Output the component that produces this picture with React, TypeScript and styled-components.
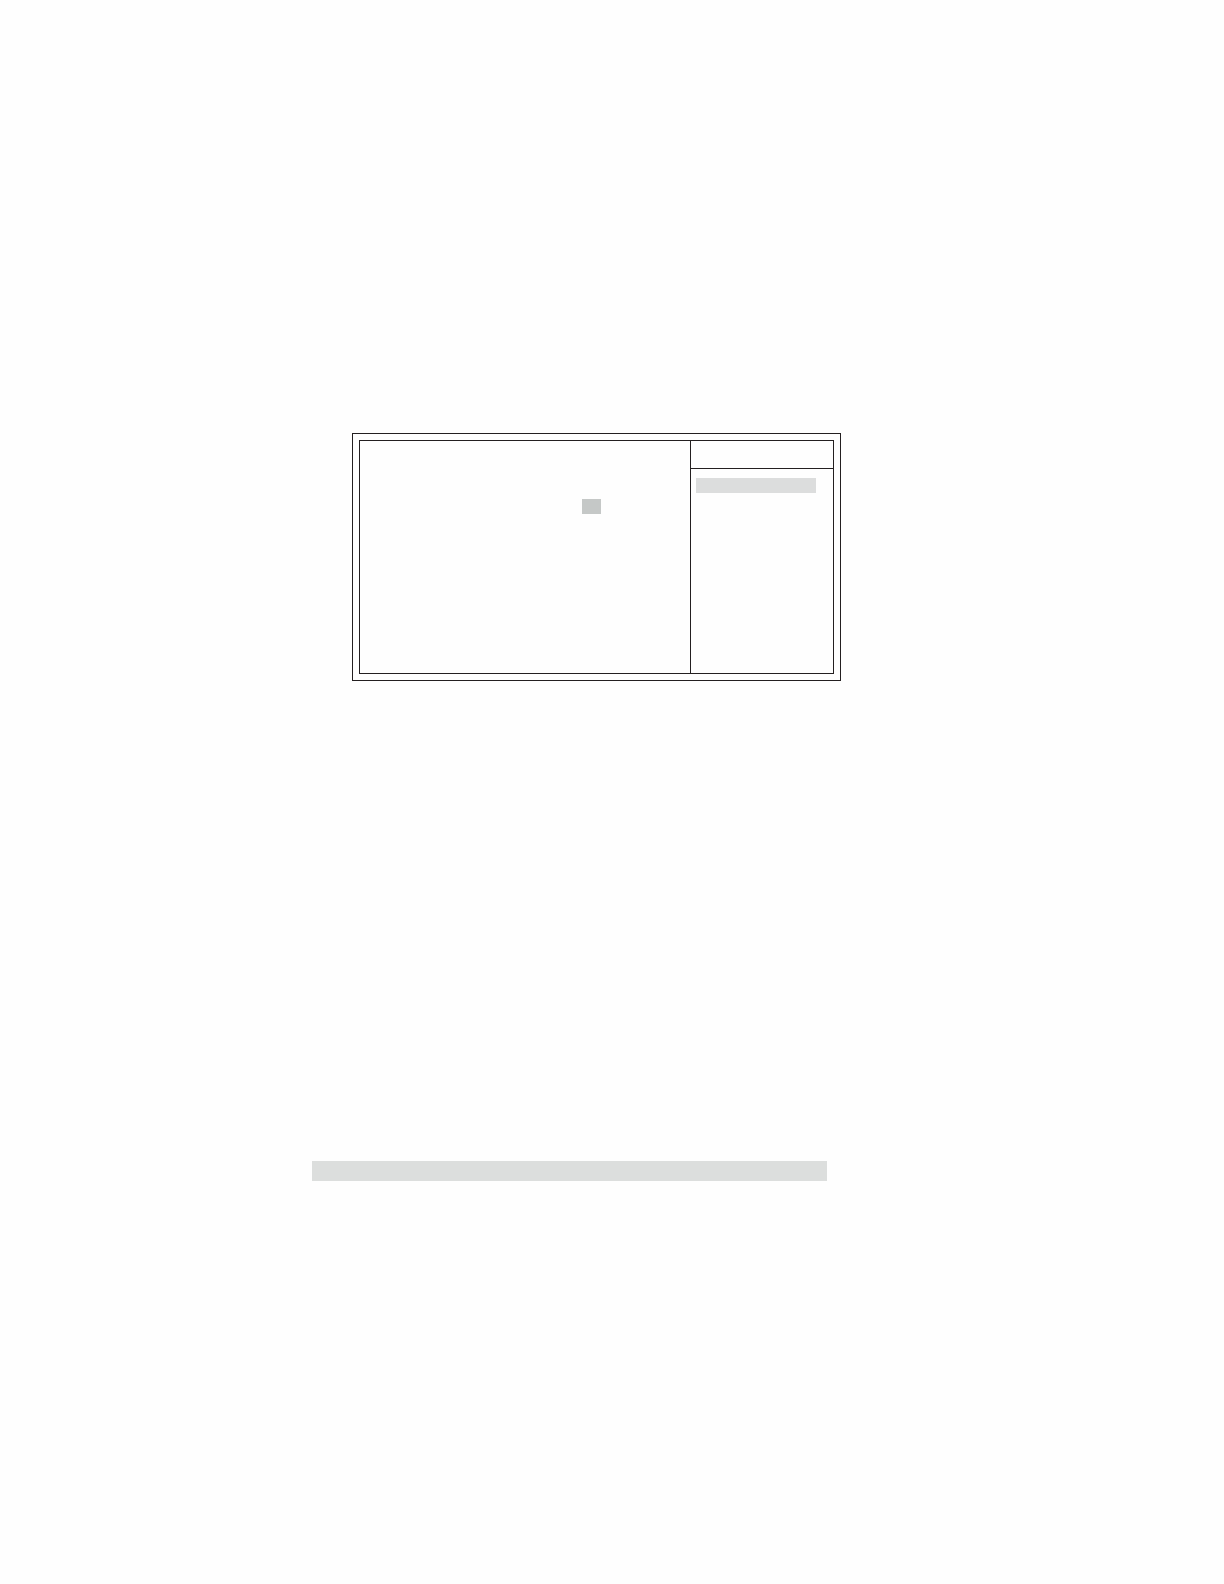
import React from "react";
import styled, { createGlobalStyle } from "styled-components";

const line = "#231f20";

const GlobalStyle = createGlobalStyle`
  *, *::before, *::after {
    box-sizing: border-box;
  }
  body {
    margin: 0;
    background: #fefefe;
    font-family: "Liberation Sans", Arial, sans-serif;
  }
`;

const Page = styled.main`
  display: flex;
  flex-direction: column;
  gap: 480px;
  padding: 433px 383px 403px 312px;
`;

const Frame = styled.section`
  margin-left: 40px;
  padding: 6px;
  border: 1px solid ${line};
`;

const Panels = styled.div`
  display: grid;
  grid-template-columns: 1fr 143px;
  min-height: 234px;
  border: 1px solid ${line};
`;

const Settings = styled.div`
  display: flex;
  justify-content: flex-end;
  align-items: flex-start;
  padding: 58px 89px 0 0;
`;

const Sidebar = styled.aside`
  display: flex;
  flex-direction: column;
  border-left: 1px solid ${line};
`;

const SidebarHeader = styled.header`
  height: 28px;
  border-bottom: 1px solid ${line};
`;

const SidebarBody = styled.div`
  padding: 9px 17px 0 5px;
`;

const SelectedValue = styled.div`
  width: 19px;
  height: 15px;
  background: #c5c8c7;
`;

const HelpHighlight = styled.div`
  height: 15px;
  background: #dcdddd;
`;

const Band = styled.div`
  height: 20px;
  margin-right: 14px;
  background: #dcdedd;
`;

export default function App() {
  return (
    <>
      <GlobalStyle />
      <Page>
        <Frame>
          <Panels>
            <Settings>
              <SelectedValue />
            </Settings>
            <Sidebar>
              <SidebarHeader />
              <SidebarBody>
                <HelpHighlight />
              </SidebarBody>
            </Sidebar>
          </Panels>
        </Frame>
        <Band />
      </Page>
    </>
  );
}
